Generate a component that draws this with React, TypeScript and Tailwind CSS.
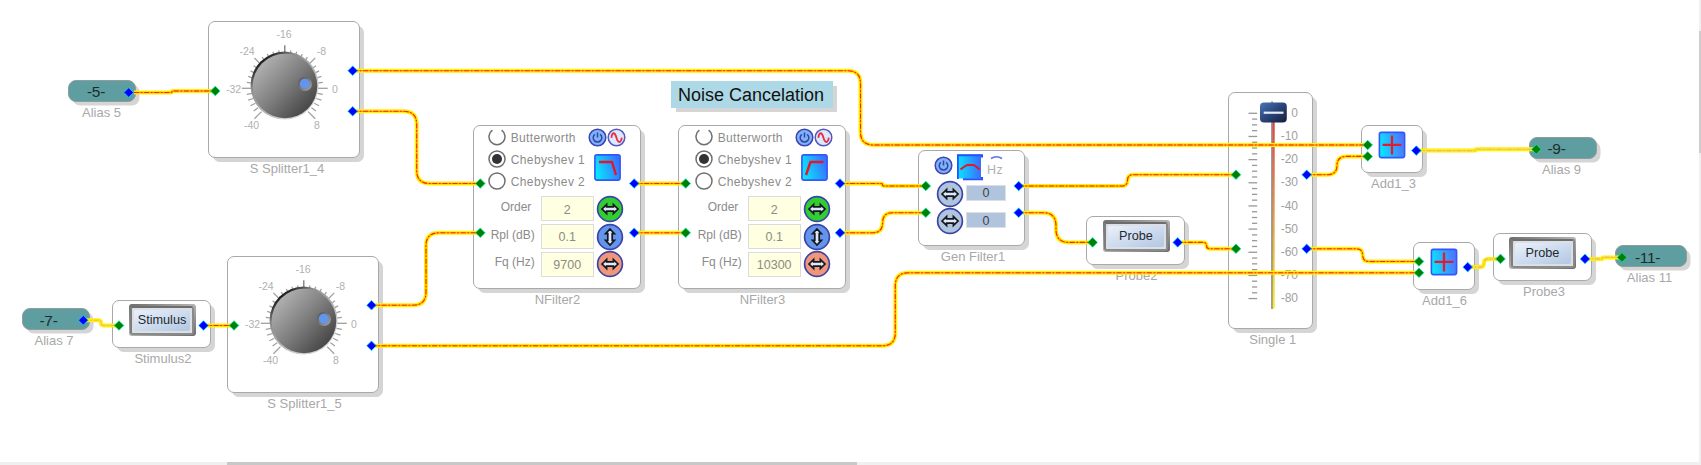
import React from "react";

type Pt = [number, number];

type WireSpec = { from: Pt; to: Pt; mid: number; pale?: boolean };

const wires: WireSpec[] = [
  { from: [134, 92.5], to: [216, 91], mid: 172 },
  { from: [353, 70.7], to: [1368, 145], mid: 860.5 },
  { from: [353, 111.3], to: [480, 183.5], mid: 416.7 },
  { from: [371.5, 305.2], to: [480, 232.8], mid: 426 },
  { from: [371.5, 345.8], to: [1419, 272.8], mid: 895.3 },
  { from: [83.5, 320.2], to: [119, 325.5], mid: 101, pale: true },
  { from: [203.5, 325.5], to: [234, 325.5], mid: 220 },
  { from: [634, 183.5], to: [686, 183.5], mid: 660 },
  { from: [634, 232.8], to: [686, 232.8], mid: 660 },
  { from: [840, 183.5], to: [926, 186], mid: 882.5 },
  { from: [840, 232.8], to: [926, 212.7], mid: 882.6 },
  { from: [1018.7, 186], to: [1236, 174.7], mid: 1127.5 },
  { from: [1018.7, 212.7], to: [1092.5, 242.4], mid: 1056 },
  { from: [1177.7, 242.4], to: [1236, 248.8], mid: 1206.5 },
  { from: [1306.7, 174.7], to: [1368, 156.4], mid: 1337 },
  { from: [1306.7, 248.8], to: [1419, 261.5], mid: 1362.7 },
  { from: [1416.3, 150.6], to: [1536, 149.3], mid: 1475.5, pale: true },
  { from: [1467.7, 267.1], to: [1500.5, 258.9], mid: 1484, pale: true },
  { from: [1585, 258.9], to: [1622, 257.4], mid: 1602.5, pale: true },
];

const greenPorts: Pt[] = [
  [215.3, 91], [480.3, 183.5], [480.3, 232.8], [119, 325.5], [234, 325.5],
  [685.7, 183.5], [685.7, 232.8], [925.8, 186], [925.8, 212.7], [1092.6, 242.4],
  [1236, 174.7], [1236, 248.8], [1367.7, 145], [1367.7, 156.4], [1419, 261.5],
  [1419, 272.8], [1536.3, 149.3], [1500.5, 258.9], [1622, 257.4],
];

const bluePorts: Pt[] = [
  [128.7, 92.5], [352.7, 70.7], [352.7, 111.3], [371.5, 305.2], [371.5, 345.8],
  [83.3, 320.2], [203.5, 325.5], [634.2, 183.5], [634.2, 232.8], [840, 183.5],
  [840, 232.8], [1018.7, 186], [1018.7, 212.7], [1177.7, 242.4], [1306.7, 174.7],
  [1306.7, 248.8], [1416.3, 150.6], [1467.7, 267.1], [1585, 258.9],
];

function wirePath({ from, to, mid }: WireSpec) {
  const [x1, y1] = from;
  const [x2, y2] = to;
  const dy = y2 - y1;
  if (Math.abs(dy) < 0.1) return `M${x1} ${y1}H${x2}`;
  const s = Math.sign(dy);
  const r = Math.min(13, Math.abs(dy) / 2);
  return `M${x1} ${y1}H${mid - r}Q${mid} ${y1} ${mid} ${y1 + s * r}V${y2 - s * r}Q${mid} ${y2} ${mid + r} ${y2}H${x2}`;
}

function Wires() {
  return (
    <svg className="absolute left-0 top-0 pointer-events-none" width="1701" height="465" fill="none">
      {wires.map((w, i) => {
        const d = wirePath(w);
        return (
          <g key={i}>
            <path d={d} stroke="#fff200" strokeWidth="4" />
            <path d={d} stroke={w.pale ? "#fbdf38" : "#ffa400"} strokeWidth="1.3" />
            <path d={d} stroke={w.pale ? "#f3b868" : "#ff2400"} strokeWidth="1.1" strokeDasharray="5 1.7 1.7 1.7" />
          </g>
        );
      })}
      {greenPorts.map(([x, y], i) => (
        <path key={i} d={`M${x - 4.8} ${y}L${x} ${y - 4.8}L${x + 4.8} ${y}L${x} ${y + 4.8}Z`} fill="#008000" stroke="#00e8b0" strokeWidth="0.8" />
      ))}
      {bluePorts.map(([x, y], i) => (
        <path key={i} d={`M${x - 4.8} ${y}L${x} ${y - 4.8}L${x + 4.8} ${y}L${x} ${y + 4.8}Z`} fill="#0000ff" stroke="#00d0ff" strokeWidth="0.8" />
      ))}
    </svg>
  );
}

type NodeProps = {
  x: number;
  y: number;
  w: number;
  h: number;
  label: string;
  labelDx?: number;
  children: React.ReactNode;
};

function Node({ x, y, w, h, label, labelDx = 0, children }: NodeProps) {
  return (
    <div className="absolute flex flex-col" style={{ left: x, top: y, width: w }}>
      <div
        className="shrink-0 rounded-[7px] border border-[#a9a9a9] bg-white shadow-[4.5px_4.5px_0_-0.5px_#d5d5d5]"
        style={{ height: h }}
      >
        {children}
      </div>
      <div className="flex justify-center whitespace-nowrap pt-[3px] text-[13px] leading-[15px] text-[#a8a8a8]">
        <span style={{ marginLeft: labelDx * 2 }}>{label}</span>
      </div>
    </div>
  );
}

function Alias({ x, y, w, text, label, shift = 0, labelDx = 0 }: { x: number; y: number; w: number; text: string; label: string; shift?: number; labelDx?: number }) {
  return (
    <div className="absolute flex flex-col" style={{ left: x, top: y, width: w }}>
      <div className="flex h-[22px] items-center justify-center rounded-[8px] border border-[#8e9c9c] bg-[#5f9ea0] text-[15.5px] tracking-[-0.3px] text-[#1c2c2c] shadow-[4px_4px_0_-0.5px_#d5d5d5]">
        <span className="pt-[2px]" style={{ marginLeft: shift * 2 }}>{text}</span>
      </div>
      <div className="flex justify-center whitespace-nowrap pt-[3px] text-[13px] leading-[15px] text-[#a8a8a8]">
        <span style={{ marginLeft: labelDx * 2 }}>{label}</span>
      </div>
    </div>
  );
}

const dialLabels: { t: string; x: number; y: number }[] = [
  { t: "-16", x: 75, y: 16 },
  { t: "-24", x: 38, y: 32.5 },
  { t: "-8", x: 112.5, y: 32.5 },
  { t: "-32", x: 24.5, y: 71 },
  { t: "0", x: 126, y: 71 },
  { t: "-40", x: 42.5, y: 107 },
  { t: "8", x: 108, y: 107 },
];

function Knob({ id }: { id: string }) {
  const ticks: React.ReactNode[] = [];
  for (let i = 0; i <= 30; i++) {
    const a = ((225 - i * 9) * Math.PI) / 180;
    const major = i % 5 === 0;
    const r2 = major ? 43 : 38.5;
    ticks.push(
      <line
        key={i}
        x1={75.8 + 33 * Math.cos(a)}
        y1={66.3 - 33 * Math.sin(a)}
        x2={75.8 + r2 * Math.cos(a)}
        y2={66.3 - r2 * Math.sin(a)}
        stroke={i === 15 ? "#777" : "#a0a0a0"}
        strokeWidth="1.3"
      />,
    );
  }
  return (
    <svg width="148" height="132" className="block">
      <defs>
        <linearGradient id={`${id}-face`} x1="0.1" y1="0.15" x2="0.85" y2="0.85">
          <stop offset="0" stopColor="#b2b2b2" />
          <stop offset="0.5" stopColor="#808080" />
          <stop offset="1" stopColor="#484848" />
        </linearGradient>
        <linearGradient id={`${id}-rim`} x1="0.15" y1="0.15" x2="0.7" y2="0.8">
          <stop offset="0" stopColor="#1c1c1c" />
          <stop offset="0.25" stopColor="#8a8a8a" />
          <stop offset="1" stopColor="#d4d4d4" />
        </linearGradient>
        <linearGradient id={`${id}-dot`} x1="0" y1="0" x2="1" y2="1">
          <stop offset="0" stopColor="#4c4c4c" />
          <stop offset="1" stopColor="#a8a8a8" />
        </linearGradient>
      </defs>
      {ticks}
      <circle cx="75.6" cy="63.6" r="34" fill={`url(#${id}-rim)`} />
      <circle cx="76" cy="64" r="32.3" fill={`url(#${id}-face)`} />
      <circle cx="96" cy="62" r="7" fill={`url(#${id}-dot)`} />
      <circle cx="95.7" cy="61.7" r="5" fill="#6495ed" />
      <g fontSize="10.5" fill="#b0b0b0" textAnchor="middle">
        {dialLabels.map((l) => (
          <text key={l.t} x={l.x} y={l.y}>{l.t}</text>
        ))}
      </g>
    </svg>
  );
}

function Monitor({ text }: { text: string }) {
  return (
    <div className="flex justify-center pl-px pt-[3px]">
      <div className="flex h-8 w-[67px] rounded-[3px] bg-linear-to-br from-[#6c6c6c] via-[#b4b4b4] to-[#6a6a6a] p-[1.5px]">
        <div className="flex flex-1 rounded-[3px] border-2 border-t-[#6d6d6d] border-l-[#7d7d7d] border-r-[#8a8a8a] border-b-[#8a8a8a] bg-[#dcdfe4] p-[2px]">
          <div className="flex flex-1 items-center justify-center rounded-[2px] bg-linear-to-br from-[#eaf1fc] to-[#b2c7e2] text-[12.7px] leading-none text-[#26292e]">
            {text}
          </div>
        </div>
      </div>
    </div>
  );
}

function Radio({ label, checked, cut, spacing }: { label: string; checked?: boolean; cut?: boolean; spacing: string }) {
  return (
    <div className="flex h-[22px] items-center gap-[5px]">
      <svg width="18" height="20" className="shrink-0">
        {cut ? (
          <path d="M4.4 2.2A8 8 0 1 0 13.6 2.2" fill="none" stroke="#6f6f6f" strokeWidth="1.5" />
        ) : (
          <circle cx="9" cy="9" r="8" fill="#fff" stroke="#6f6f6f" strokeWidth="1.5" />
        )}
        {checked && <circle cx="9" cy="9" r="5" fill="#333" />}
      </svg>
      <span className={`whitespace-nowrap text-[12px] leading-none text-[#8b8b8b] ${spacing}`}>{label}</span>
    </div>
  );
}

function PowerIcon() {
  return (
    <svg width="19" height="19" className="shrink-0">
      <circle cx="9.5" cy="9.5" r="8.3" fill="#7fb2fa" stroke="#3d44b4" strokeWidth="1.5" />
      <path d="M6.9 6.3A4.3 4.3 0 1 0 12.1 6.3M9.5 4.6V9.6" fill="none" stroke="#34469e" strokeWidth="1.5" />
    </svg>
  );
}

function SineIcon() {
  return (
    <svg width="19" height="19" className="shrink-0">
      <circle cx="9.5" cy="9.5" r="8.3" fill="#dce8fb" stroke="#5559bd" strokeWidth="1.5" />
      <path d="M4.4 9.8C5 4 7.8 3.6 9.4 9.5S13.8 15.6 14.8 9.6" fill="none" stroke="#ee2c40" strokeWidth="1.8" />
    </svg>
  );
}

function CurveIcon({ d, id }: { d: string; id: string }) {
  return (
    <svg width="27" height="27" className="shrink-0">
      <defs>
        <linearGradient id={id} x1="0" y1="0.6" x2="1" y2="0.3">
          <stop offset="0" stopColor="#08e8ff" />
          <stop offset="1" stopColor="#3a6cff" />
        </linearGradient>
      </defs>
      <rect x="0.9" y="0.9" width="25.2" height="25.2" rx="2" fill={`url(#${id})`} stroke="#3058fa" strokeWidth="1.6" />
      <path d={d} fill="none" stroke="#e01828" strokeWidth="2.4" strokeLinejoin="round" />
    </svg>
  );
}

function ArrowButton({ fill, vertical }: { fill: string; vertical?: boolean }) {
  return (
    <svg width="28" height="28" viewBox="-14 -14 28 28" className="block shrink-0">
      <circle r="12.4" fill={fill} stroke="#3b44a8" strokeWidth="1.7" />
      <path
        transform={vertical ? "rotate(90)" : undefined}
        d="M-8 0L-3.4 -4.4V-2.2H3.4V-4.4L8 0L3.4 4.4V2.2H-3.4V4.4Z"
        fill="#dfe8fb"
        stroke="#14181e"
        strokeWidth="1.7"
      />
    </svg>
  );
}

function ParamRow({ label, value, fill, vertical }: { label: string; value: string; fill: string; vertical?: boolean }) {
  return (
    <div className="flex h-[27.7px] items-center">
      <span className="w-[48px] whitespace-nowrap pb-[4px] text-right text-[12px] leading-none text-[#8b8b8b]">
        {label}
      </span>
      <div className="ml-[6px] flex h-[25px] w-[53px] items-center justify-center border border-[#dcdcdc] bg-[#ffffe1] text-[12.5px] leading-none text-[#8c8c80]">
        <span className="pt-[2px]">{value}</span>
      </div>
      <div className="ml-[2px]">
        <ArrowButton fill={fill} vertical={vertical} />
      </div>
    </div>
  );
}

function FilterBody({ curve, id, fq }: { curve: string; id: string; fq: string }) {
  return (
    <div className="flex flex-col pl-[14px] pt-px">
      <div className="flex">
        <div className="flex w-[99px] flex-col">
          <Radio label="Butterworth" cut spacing="tracking-[0.35px]" />
          <Radio label="Chebyshev 1" checked spacing="tracking-[0.4px]" />
          <Radio label="Chebyshev 2" spacing="tracking-[0.4px]" />
        </div>
        <div className="flex flex-col items-center pl-[2px]">
          <div className="-ml-px flex pt-[1px]">
            <PowerIcon />
            <SineIcon />
          </div>
          <div className="pt-[7px]">
            <CurveIcon d={curve} id={id} />
          </div>
        </div>
      </div>
      <div className="-ml-px flex flex-col pt-[2px]">
        <ParamRow label="Order&nbsp;" value="2" fill="#32cd32" />
        <ParamRow label="Rpl (dB)" value="0.1" fill="#6495ed" vertical />
        <ParamRow label="Fq (Hz)" value={fq} fill="#f0967a" />
      </div>
    </div>
  );
}

function GenRow() {
  return (
    <div className="flex h-[27.5px] items-center gap-[2px]">
      <ArrowButton fill="#b0c4de" />
      <div className="mb-[2px] flex h-[16px] w-10 items-center justify-center border border-[#dcdfe4] bg-[#b0c4de] text-[12.5px] leading-none text-[#3c4248]">
        <span className="pt-px">0</span>
      </div>
    </div>
  );
}

function GenBody() {
  return (
    <div className="flex flex-col pl-[17px] pt-[3px]">
      <div className="-ml-[2px] flex h-[26px] items-start">
        <div className="pt-[2px]">
          <PowerIcon />
        </div>
        <svg width="52" height="28" className="ml-[4px]">
          <defs>
            <linearGradient id="gen-curve" x1="0" y1="0" x2="1" y2="0">
              <stop offset="0" stopColor="#08e8ff" />
              <stop offset="1" stopColor="#3a6cff" />
            </linearGradient>
          </defs>
          <rect x="0" y="0.5" width="24" height="24" fill="url(#gen-curve)" />
          <path d="M0.8 25V1.2H25V3.5M6 25.2H25V23" fill="none" stroke="#2452ff" strokeWidth="2" />
          <path d="M3.5 15.5Q9 11 11 11H16Q18 11 22.5 15.5" fill="none" stroke="#e01828" strokeWidth="2.2" />
          <path d="M34 4.5Q39.5 1 45 4.5" fill="none" stroke="#5976ea" strokeWidth="1.6" />
          <text x="30" y="19.8" fontSize="12.5" letterSpacing="0.5" fill="#b0b0b0">Hz</text>
        </svg>
      </div>
      <GenRow />
      <GenRow />
    </div>
  );
}

function FaderBody() {
  return (
    <svg width="83" height="234" className="block">
      <defs>
        <linearGradient id="fader-track" x1="0" y1="0" x2="0" y2="1">
          <stop offset="0" stopColor="#ec3838" />
          <stop offset="0.5" stopColor="#e89a48" />
          <stop offset="1" stopColor="#f4f020" />
        </linearGradient>
        <linearGradient id="fader-cap" x1="0" y1="0" x2="1" y2="1">
          <stop offset="0" stopColor="#4a74b8" />
          <stop offset="0.5" stopColor="#2a4478" />
          <stop offset="1" stopColor="#141c38" />
        </linearGradient>
      </defs>
      {Array.from({ length: 33 }, (_, i) => {
        const y = 20.3 + i * 5.79;
        return <line key={i} x1={i % 4 === 0 ? 19.5 : 23} x2="28.2" y1={y} y2={y} stroke="#999" strokeWidth="1.3" />;
      })}
      <rect x="42.2" y="8.5" width="1.7" height="207.5" fill="#858585" />
      <rect x="43.7" y="24" width="2" height="191.5" fill="url(#fader-track)" />
      <rect x="31" y="9.5" width="26.8" height="20" rx="4" fill="url(#fader-cap)" />
      <rect x="34.7" y="18.6" width="19.8" height="2.2" fill="#e4ebf5" />
      <g fontSize="12" fill="#a0a0a0" textAnchor="end">
        {[0, -10, -20, -30, -40, -50, -60, -70, -80].map((v, i) => (
          <text key={v} x="69" y={24 + i * 23.15}>{v}</text>
        ))}
      </g>
    </svg>
  );
}

function AddBody({ id }: { id: string }) {
  return (
    <div className="flex pl-[16px] pt-[5px]">
      <svg width="28" height="28" viewBox="-0.5 -0.5 28 28">
        <defs>
          <linearGradient id={id} x1="0" y1="0.6" x2="1" y2="0.4">
            <stop offset="0" stopColor="#08e8ff" />
            <stop offset="1" stopColor="#5070ff" />
          </linearGradient>
        </defs>
        <rect x="0.9" y="0.9" width="25.2" height="25.2" rx="2" fill={`url(#${id})`} stroke="#3058fa" strokeWidth="1.6" />
        <path d="M13.5 4V23M4 13.3H23" stroke="#e21c30" strokeWidth="2.3" />
      </svg>
    </div>
  );
}

export default function App() {
  return (
    <div className="relative h-[465px] w-[1701px] overflow-hidden bg-white font-['Liberation_Sans',Arial,sans-serif]">
      <Alias x={67.5} y={80} w={68} text="-5-" label="Alias 5" shift={-5.5} />
      <Node x={207.5} y={21} w={152} h={137} label="S Splitter1_4" labelDx={3.5}>
        <Knob id="k4" />
      </Node>
      <Alias x={21.5} y={308.3} w={68} text="-7-" label="Alias 7" shift={-7} labelDx={-1.5} />
      <Node x={112} y={300.3} w={99} h={48} label="Stimulus2" labelDx={1.5}>
        <Monitor text="Stimulus" />
      </Node>
      <Node x={227} y={255.6} w={152} h={137.5} label="S Splitter1_5" labelDx={1.5}>
        <Knob id="k5" />
      </Node>
      <Node x={472.7} y={125} w={168.5} h={163.5} label="NFilter2" labelDx={0.5}>
        <FilterBody curve="M5 8H18L22 21" id="lp" fq="9700" />
      </Node>
      <Node x={677.7} y={125} w={168.5} h={163.5} label="NFilter3" labelDx={0.5}>
        <div className="pl-[2px]">
          <FilterBody curve="M5 21L9.5 8H22.5" id="hp" fq="10300" />
        </div>
      </Node>
      <div className="absolute left-[671px] top-[81px] flex h-[27px] w-[162px] items-center justify-center bg-[#add8e6] pr-[2px] text-lg leading-none text-[#111] shadow-[4.5px_4.5px_0_-0.5px_#d5d5d5]">
        <span className="whitespace-nowrap">Noise Cancelation</span>
      </div>
      <Node x={918} y={150} w={107} h={96} label="Gen Filter1" labelDx={1.5}>
        <GenBody />
      </Node>
      <Node x={1086} y={216.3} w={99} h={48.5} label="Probe2" labelDx={1}>
        <Monitor text="Probe" />
      </Node>
      <Node x={1227.5} y={92} w={85.5} h={236.5} label="Single 1" labelDx={2.5}>
        <FaderBody />
      </Node>
      <Node x={1361} y={125} w={62} h={48} label="Add1_3" labelDx={1.5}>
        <AddBody id="a3" />
      </Node>
      <Node x={1412.5} y={241.6} w={62} h={48} label="Add1_6" labelDx={1}>
        <AddBody id="a6" />
      </Node>
      <Node x={1492.5} y={233.4} w={99} h={48} label="Probe3" labelDx={2}>
        <Monitor text="Probe" />
      </Node>
      <Alias x={1529} y={137} w={68} text="-9-" label="Alias 9" shift={-6.5} labelDx={-1.5} />
      <Alias x={1615} y={245.3} w={72} text="-11-" label="Alias 11" shift={-3.5} labelDx={-1.5} />
      <Wires />
      <div className="absolute bottom-0 left-0 flex h-[3px] w-full bg-[#f0f0f0]">
        <div className="ml-[227px] w-[630px] bg-[#c8c8c8]" />
      </div>
      <div className="absolute right-0 top-0 flex h-full w-[2px] flex-col bg-[#f0f0f0]">
        <div className="mt-[31px] h-[122px] w-full bg-[#cdcdcd]" />
      </div>
    </div>
  );
}
